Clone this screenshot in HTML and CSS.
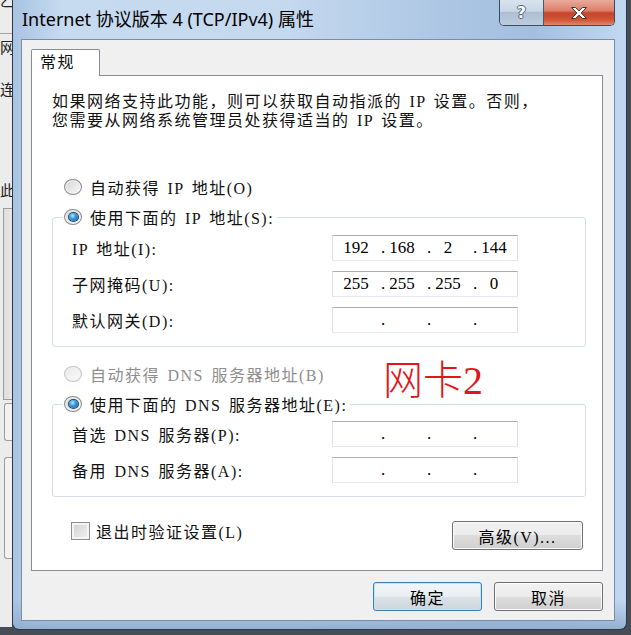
FILE: index.html
```html
<!DOCTYPE html>
<html lang="zh-CN">
<head>
    <meta charset="UTF-8">
    <meta name="viewport" content="width=device-width, initial-scale=1.0">
    <title>Internet 协议版本 4 (TCP/IPv4) 属性</title>
    <link rel="stylesheet" href="styles.css">
</head>
<body>

    <!-- part of the window lying behind the dialog -->
    <div class="behind">
        <div class="behind-char c1">乙</div>
        <div class="behind-rule"></div>
        <div class="behind-char c2">网</div>
        <div class="behind-char c3">连</div>
        <div class="behind-char c4">此</div>
        <div class="behind-box b1"></div>
        <div class="behind-box b2"></div>
        <div class="behind-box b3"></div>
    </div>

    <div class="window">
        <div class="titlebar">
            <div class="title">Internet 协议版本 4 (TCP/IPv4) 属性</div>
            <div class="caption-buttons">
                <div class="cap-btn help">?</div>
                <div class="cap-btn close">
                    <svg width="18" height="12" viewBox="0 0 18 12">
                        <path d="M1.5,0.5 H5.5 L9,3.8 L12.5,0.5 H16.5 L11.2,6 L16.5,11.5 H12.5 L9,8.2 L5.5,11.5 H1.5 L6.8,6 Z" fill="#fff" stroke="#4a302a" stroke-width="1"/>
                    </svg>
                </div>
            </div>
        </div>

        <div class="client">
            <div class="tabs">
                <div class="tab">常规</div>
            </div>

            <div class="panel">
                <p class="intro">如果网络支持此功能，则可以获取自动指派的 IP 设置。否则，<br>您需要从网络系统管理员处获得适当的 IP 设置。</p>

                <div class="radio-row"><span class="radio"></span>自动获得 IP 地址(O)</div>

                <fieldset class="group">
                    <legend><span class="radio checked"></span>使用下面的 IP 地址(S):</legend>
                    <div class="field-row">
                        <span class="label">IP 地址(I):</span>
                        <div class="ip-box">
                            <span class="seg"><span class="dot"></span><span class="octet">192</span></span>
                            <span class="seg"><span class="dot">.</span><span class="octet">168</span></span>
                            <span class="seg"><span class="dot">.</span><span class="octet">2</span></span>
                            <span class="seg"><span class="dot">.</span><span class="octet">144</span></span>
                        </div>
                    </div>
                    <div class="field-row">
                        <span class="label">子网掩码(U):</span>
                        <div class="ip-box">
                            <span class="seg"><span class="dot"></span><span class="octet">255</span></span>
                            <span class="seg"><span class="dot">.</span><span class="octet">255</span></span>
                            <span class="seg"><span class="dot">.</span><span class="octet">255</span></span>
                            <span class="seg"><span class="dot">.</span><span class="octet">0</span></span>
                        </div>
                    </div>
                    <div class="field-row">
                        <span class="label">默认网关(D):</span>
                        <div class="ip-box">
                            <span class="seg"><span class="dot"></span><span class="octet"></span></span>
                            <span class="seg"><span class="dot">.</span><span class="octet"></span></span>
                            <span class="seg"><span class="dot">.</span><span class="octet"></span></span>
                            <span class="seg"><span class="dot">.</span><span class="octet"></span></span>
                        </div>
                    </div>
                </fieldset>

                <div class="radio-row disabled"><span class="radio"></span>自动获得 DNS 服务器地址(B)</div>

                <fieldset class="group dns">
                    <legend><span class="radio checked"></span>使用下面的 DNS 服务器地址(E):</legend>
                    <div class="field-row">
                        <span class="label">首选 DNS 服务器(P):</span>
                        <div class="ip-box">
                            <span class="seg"><span class="dot"></span><span class="octet"></span></span>
                            <span class="seg"><span class="dot">.</span><span class="octet"></span></span>
                            <span class="seg"><span class="dot">.</span><span class="octet"></span></span>
                            <span class="seg"><span class="dot">.</span><span class="octet"></span></span>
                        </div>
                    </div>
                    <div class="field-row">
                        <span class="label">备用 DNS 服务器(A):</span>
                        <div class="ip-box">
                            <span class="seg"><span class="dot"></span><span class="octet"></span></span>
                            <span class="seg"><span class="dot">.</span><span class="octet"></span></span>
                            <span class="seg"><span class="dot">.</span><span class="octet"></span></span>
                            <span class="seg"><span class="dot">.</span><span class="octet"></span></span>
                        </div>
                    </div>
                </fieldset>

                <div class="panel-footer">
                    <div class="check-row"><span class="checkbox"></span>退出时验证设置(L)</div>
                    <button class="btn btn-advanced">高级(V)...</button>
                </div>

                <!-- red note written over the screenshot -->
                <div class="annotation">网卡2</div>
            </div>

            <div class="dialog-buttons">
                <button class="btn btn-default">确定</button>
                <button class="btn">取消</button>
            </div>
        </div>
    </div>

</body>
</html>
```

FILE: styles.css
```css
body {
    margin: 0;
    width: 631px;
    height: 635px;
    overflow: hidden;
    display: flex;
    align-items: flex-start;
    background-color: #474d55;
    font-family: "Liberation Serif", "Noto Sans CJK SC", serif;
    font-size: 16px;
    letter-spacing: 1.5px;
    word-spacing: 2px;
    color: #111;
}

/* window in the background */
.behind {
    width: 12px;
    height: 627px;
    flex: none;
    overflow: hidden;
    display: flex;
    flex-direction: column;
    background-color: #ececec;
}
.behind-char {
    font-size: 15px;
    line-height: 16px;
    letter-spacing: 0;
    color: #222;
    white-space: nowrap;
}
.c1 { margin-top: -7px; }
.c2 { margin-top: 6px; }
.c3 { margin-top: 26px; }
.c4 { margin-top: 85px; }
.behind-rule {
    height: 1px;
    margin-top: 24px;
    background-color: #a4a4a4;
}
.behind-box {
    flex: none;
    width: 20px;
    border: 1px solid #9c9c9c;
    border-right: none;
    background: linear-gradient(to right, #dedede, #f3f3f3);
}
.b1 { margin: 9px 0 0 3px; height: 190px; }
.b2 { margin: 3px 0 0 4px; height: 36px; border-radius: 3px 0 0 3px; background: #f2f2f2; }
.b3 { margin: 16px 0 0 4px; height: 100px; border-radius: 3px 0 0 3px; background: #f2f2f2; }

/* dialog frame */
.window {
    width: 615px;
    height: 630px;
    flex: none;
    box-sizing: border-box;
    display: flex;
    flex-direction: column;
    border: 1px solid #2c394a;
    border-top: none;
    border-radius: 0 0 7px 7px;
    background:
        linear-gradient(to bottom, rgba(150, 178, 212, 0) 600px, #94b0d2 629px),
        linear-gradient(to right, #a9c3e2 0%, #c6daf0 8%, #c4d8ee 45%, #abc5e3 72%, #a3bfe0 85%, #c2d8f1 100%);
}
.titlebar {
    height: 39px;
    flex: none;
    display: flex;
    justify-content: space-between;
    align-items: flex-start;
}
.title {
    padding-left: 9px;
    line-height: 39px;
    font-family: "Noto Sans", "Noto Sans CJK SC", sans-serif;
    font-size: 18px;
    letter-spacing: 0;
    word-spacing: 0;
    color: #000;
}
.caption-buttons {
    display: flex;
    height: 25px;
    margin-right: 11px;
    border: 1px solid #3d4b5e;
    border-top: none;
    border-radius: 0 0 5px 5px;
    overflow: hidden;
}
.cap-btn {
    display: flex;
    align-items: center;
    justify-content: center;
}
.help {
    width: 43px;
    border-right: 1px solid #4a5a6e;
    background: linear-gradient(to bottom, #d9e3ee 0%, #c8d6e5 45%, #aebfd3 50%, #bccde0 100%);
    font-family: "DejaVu Sans", sans-serif;
    font-weight: bold;
    font-size: 16px;
    letter-spacing: 0;
    color: #f6f8fa;
    text-shadow: 1px 0 #566477, -1px 0 #566477, 0 1px #566477, 0 -1px #566477;
}
.close {
    width: 70px;
    background: linear-gradient(to bottom, #e9ab9c 0%, #dd806b 42%, #c8432b 52%, #cf5638 80%, #de8a6b 100%);
}

/* client area */
.client {
    flex: 1;
    margin: 0 11px 8px 8px;
    padding: 9px 11px 0 9px;
    border: 1px solid #7a8da5;
    background-color: #f0f0f0;
    display: flex;
    flex-direction: column;
}
.tabs {
    display: flex;
}
.tab {
    position: relative;
    z-index: 1;
    width: 69px;
    height: 27px;
    box-sizing: border-box;
    margin-bottom: -1px;
    padding-left: 8px;
    border: 1px solid #898c95;
    border-bottom: none;
    border-radius: 2px 2px 0 0;
    background-color: #fff;
    line-height: 26px;
}
.panel {
    position: relative;
    height: 496px;
    box-sizing: border-box;
    padding: 16px 16px 0 20px;
    border: 1px solid #898c95;
    background-color: #fff;
}
.intro {
    margin: 0;
    line-height: 19px;
}

.radio-row {
    display: flex;
    align-items: center;
    height: 20px;
    margin-top: 47px;
    padding-left: 12px;
}
.radio-row.disabled {
    margin-top: 17px;
    color: #8e8e8e;
}
.radio {
    flex: none;
    width: 18px;
    height: 16px;
    box-sizing: border-box;
    margin-right: 8px;
    border: 1px solid #8a8a8a;
    border-radius: 50%;
    background: linear-gradient(135deg, #d4d4d4, #f9f9f9);
    box-shadow: inset 0 0 0 1px #f2f2f2;
    display: flex;
    align-items: center;
    justify-content: center;
}
.disabled .radio {
    border-color: #c4c4c4;
    background: linear-gradient(135deg, #e8e8e8, #fbfbfb);
}
.radio.checked::after {
    content: "";
    width: 9px;
    height: 8px;
    border-radius: 50%;
    background: radial-gradient(circle at 40% 35%, #b8ecff 0, #3a9ae0 40%, #0b4f8c 100%);
    box-shadow: 0 0 0 1px #1d4a74;
}

.group {
    min-width: 0;
    margin: 10px 0 0 0;
    padding: 8px 0 13px 0;
    border: 1px solid #d5dfe5;
    border-radius: 3px;
}
.group.dns {
    padding-top: 7px;
}
.group legend {
    display: flex;
    align-items: center;
    height: 20px;
    margin-left: 10px;
    padding: 0 3px 0 1px;
}
.field-row {
    display: flex;
    align-items: center;
    padding-left: 19px;
}
.field-row + .field-row {
    margin-top: 10px;
}
.label {
    width: 260px;
    flex: none;
}
.ip-box {
    width: 186px;
    height: 26px;
    box-sizing: border-box;
    border: 1px solid;
    border-color: #abadb3 #dbdfe6 #e3e9ef #e2e3ea;
    background-color: #fff;
    display: grid;
    grid-template-columns: repeat(4, 46px);
    font-size: 17px;
    letter-spacing: 0;
    word-spacing: 0;
    line-height: 24px;
    color: #000;
}
.seg {
    display: flex;
}
.dot {
    width: 8px;
    text-align: center;
}
.octet {
    width: 30px;
    text-align: center;
}

.panel-footer {
    display: flex;
    justify-content: space-between;
    align-items: flex-start;
    margin-top: 24px;
    padding: 0 3px 0 19px;
}
.check-row {
    display: flex;
    align-items: center;
    height: 20px;
}
.checkbox {
    width: 19px;
    height: 18px;
    box-sizing: border-box;
    margin-right: 6px;
    border: 1px solid #8e8f8f;
    background: linear-gradient(135deg, #cfcfcf, #f2f2f2);
    box-shadow: inset 0 0 0 2px #f4f4f4;
}

.btn {
    width: 109px;
    height: 29px;
    padding: 0;
    border: 1px solid #707070;
    border-radius: 3px;
    background: linear-gradient(to bottom, #f2f2f2 0%, #ebebeb 50%, #dddddd 50%, #cfcfcf 100%);
    box-shadow: inset 0 0 0 1px #fbfbfb;
    font: inherit;
    letter-spacing: inherit;
    color: #000;
}
.btn-advanced {
    width: 131px;
}
.btn-default {
    border-color: #3c7fb1;
    box-shadow: inset 0 0 0 1px #bfe3f7;
    background: linear-gradient(to bottom, #f2f6f9 0%, #e9eef2 50%, #dae2e8 50%, #cfd7de 100%);
}

.dialog-buttons {
    display: flex;
    justify-content: flex-end;
    gap: 12px;
    margin-top: 11px;
}

.annotation {
    position: absolute;
    left: 351px;
    top: 285px;
    font-size: 40px;
    line-height: 40px;
    font-weight: 300;
    letter-spacing: 0;
    color: #e2151b;
}
```
